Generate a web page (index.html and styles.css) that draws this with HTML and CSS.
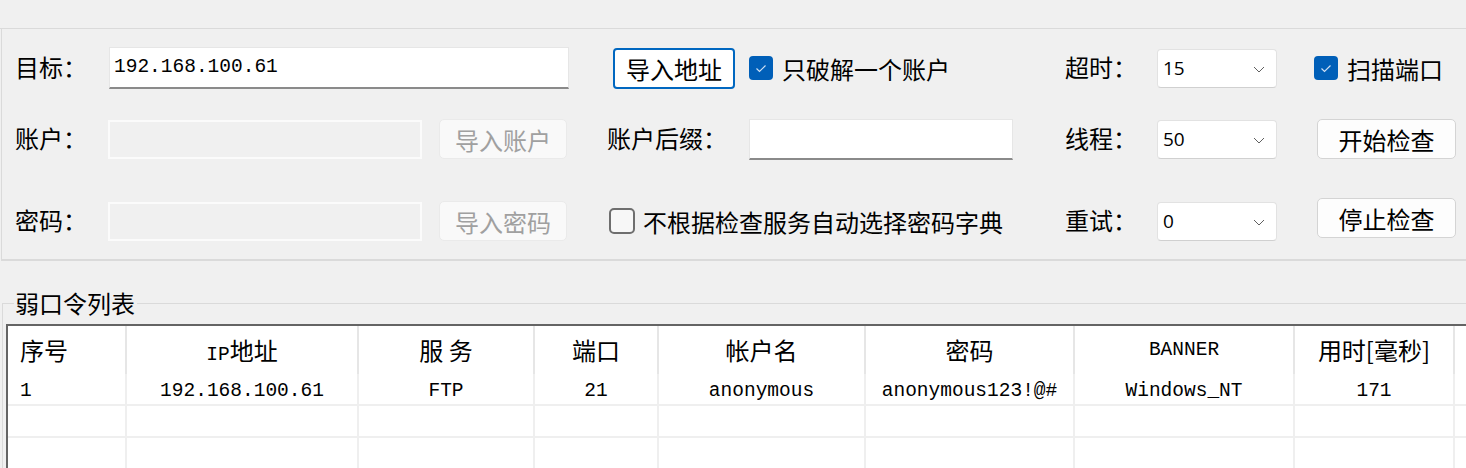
FILE: index.html
```html
<!DOCTYPE html>
<html lang="zh-CN">
<head>
<meta charset="utf-8">
<title>弱口令检查</title>
<link rel="stylesheet" href="styles.css">
</head>
<body>
<div class="app">
  <div class="topbar"></div>
  <div class="panel">
    <!-- row 1 -->
    <div class="label r1 c1">目标：</div>
    <div class="input target r1 c2">192.168.100.61</div>
    <div class="btn primary r1 c4">导入地址</div>
    <label class="check r1 c5">
      <svg class="box" width="24" height="24" viewBox="0 0 24 24"><rect x="0" y="0" width="24" height="24" rx="4" fill="#005fb8"/><path d="M7.5 12.5 L10.5 15.5 L16.5 9.5" fill="none" stroke="#cfe0f3" stroke-width="1.2"/></svg>
      <span>只破解一个账户</span>
    </label>
    <div class="label r1 c6">超时：</div>
    <div class="select r1 c7"><span>15</span><svg width="12" height="7" viewBox="0 0 12 7"><path d="M1 1 L6 6 L11 1" fill="none" stroke="#606060" stroke-width="1"/></svg></div>
    <label class="check r1 c8">
      <svg class="box" width="24" height="24" viewBox="0 0 24 24"><rect x="0" y="0" width="24" height="24" rx="4" fill="#005fb8"/><path d="M7.5 12.5 L10.5 15.5 L16.5 9.5" fill="none" stroke="#cfe0f3" stroke-width="1.2"/></svg>
      <span>扫描端口</span>
    </label>

    <!-- row 2 -->
    <div class="label r2 c1">账户：</div>
    <div class="input disabled r2 c2"></div>
    <div class="btn disabled-btn r2 c3">导入账户</div>
    <div class="label r2 c4">账户后缀：</div>
    <div class="input suffix r2 c5"></div>
    <div class="label r2 c6">线程：</div>
    <div class="select r2 c7"><span>50</span><svg width="12" height="7" viewBox="0 0 12 7"><path d="M1 1 L6 6 L11 1" fill="none" stroke="#606060" stroke-width="1"/></svg></div>
    <div class="btn action r2 c8">开始检查</div>

    <!-- row 3 -->
    <div class="label r3 c1">密码：</div>
    <div class="input disabled r3 c2"></div>
    <div class="btn disabled-btn r3 c3">导入密码</div>
    <label class="check unchecked r3 c45">
      <svg class="box" width="26" height="26" viewBox="0 0 26 26"><rect x="1" y="1" width="24" height="24" rx="4" fill="#f7f7f7" stroke="#6e6e6e" stroke-width="2"/></svg>
      <span>不根据检查服务自动选择密码字典</span>
    </label>
    <div class="label r3 c6">重试：</div>
    <div class="select r3 c7"><span>0</span><svg width="12" height="7" viewBox="0 0 12 7"><path d="M1 1 L6 6 L11 1" fill="none" stroke="#606060" stroke-width="1"/></svg></div>
    <div class="btn action stop r3 c8">停止检查</div>
  </div>

  <div class="group">
    <div class="group-title">弱口令列表</div>
    <div class="table">
      <div class="row head">
        <div class="cell left">序号</div>
        <div class="cell"><span class="mono">IP</span>地址</div>
        <div class="cell">服 务</div>
        <div class="cell">端口</div>
        <div class="cell">帐户名</div>
        <div class="cell">密码</div>
        <div class="cell mono">BANNER</div>
        <div class="cell">用时[毫秒]</div>
        <div class="cell last"></div>
      </div>
      <div class="row data">
        <div class="cell left">1</div>
        <div class="cell">192.168.100.61</div>
        <div class="cell">FTP</div>
        <div class="cell">21</div>
        <div class="cell">anonymous</div>
        <div class="cell">anonymous123!@#</div>
        <div class="cell">Windows_NT</div>
        <div class="cell">171</div>
        <div class="cell last"></div>
      </div>
      <div class="row data">
        <div class="cell"></div><div class="cell"></div><div class="cell"></div><div class="cell"></div><div class="cell"></div><div class="cell"></div><div class="cell"></div><div class="cell"></div><div class="cell last"></div>
      </div>
      <div class="row data final">
        <div class="cell"></div><div class="cell"></div><div class="cell"></div><div class="cell"></div><div class="cell"></div><div class="cell"></div><div class="cell"></div><div class="cell"></div><div class="cell last"></div>
      </div>
    </div>
  </div>
</div>
</body>
</html>
```

FILE: styles.css
```css
* { box-sizing: border-box; }

html, body {
  margin: 0;
  padding: 0;
  background: #f0f0f0;
}

body {
  width: 1466px;
  height: 468px;
  overflow: hidden;
  font-family: "Noto Sans CJK SC", "Noto Sans", sans-serif;
  font-size: 24px;
  color: #000;
}

.app {
  width: 1466px;
  height: 468px;
}

.topbar {
  height: 29px;
  border-bottom: 1px solid #dadada;
}

.panel {
  margin-left: 1px;
  border-left: 1px solid #dadada;
  border-bottom: 2px solid #dadada;
  padding: 17px 0 16px 14px;
  display: grid;
  grid-template-columns: 92px 331px 169px 141px 317px 91px 157px 150px;
  grid-template-rows: 44px 27px 44px 38px 44px;
  align-items: center;
}

.r1 { grid-row: 1; }
.r2 { grid-row: 3; }
.r3 { grid-row: 5; }
.c1 { grid-column: 1; }
.c2 { grid-column: 2; }
.c3 { grid-column: 3; }
.c4 { grid-column: 4; }
.c5 { grid-column: 5; }
.c45 { grid-column: 4 / 6; }
.c6 { grid-column: 6; }
.c7 { grid-column: 7; }
.c8 { grid-column: 8; }

.label {
  line-height: 30px;
  white-space: nowrap;
  margin-left: -1px;
  margin-top: -2px;
}

.input {
  height: 40px;
  background: #fff;
  border: 1px solid #e6e6e6;
}

.input.target {
  grid-column: 2 / 4;
  width: 460px;
  margin-left: 1px;
  height: 42px;
  border-bottom: 2px solid #8a8a8a;
  font-family: "Liberation Mono", monospace;
  font-size: 19.5px;
  line-height: 38px;
  padding-left: 4px;
}

.input.disabled {
  width: 314px;
  height: 39px;
  background: #f0f0f0;
  border: 2px solid #fbfbfb;
}

.input.suffix {
  width: 264px;
  height: 41px;
  border-bottom: 2px solid #8a8a8a;
}

.btn {
  display: flex;
  align-items: center;
  justify-content: center;
  height: 40px;
  border-radius: 5px;
  white-space: nowrap;
}

.btn.primary {
  width: 122px;
  margin-left: 5px;
  height: 41px;
  background: #fff;
  border: 2px solid #0067c0;
  border-radius: 4px;
}

.btn.disabled-btn {
  width: 128px;
  background: #f9f9f9;
  border: 1px solid #eaeaea;
  color: #a0a0a0;
}

.btn.action {
  width: 139px;
  margin-left: 3px;
  background: #fdfdfd;
  border: 1px solid #d4d4d4;
}

.btn.stop {
  margin-top: -6px;
}

.check {
  display: flex;
  align-items: center;
  gap: 9px;
  white-space: nowrap;
}

.check .box { flex: none; }

.check.unchecked {
  margin-left: 1px;
  gap: 8px;
}

.select {
  width: 120px;
  height: 39px;
  background: #fff;
  border: 1px solid #e2e2e2;
  border-bottom-color: #d0d0d0;
  border-radius: 4px;
  display: flex;
  align-items: center;
  justify-content: space-between;
  padding: 0 11px 0 5px;
  font-family: "Open Sans", "Noto Sans", sans-serif;
  font-size: 19px;
}

.select svg { margin-top: 2px; }

.group {
  margin-top: 42px;
  margin-left: 2px;
  border-top: 1px solid #dadada;
  border-left: 1px solid #dadada;
}

.group-title {
  width: fit-content;
  margin-top: -14px;
  margin-left: 11px;
  padding: 0 2px 0 1px;
  background: #f0f0f0;
  line-height: 26px;
  height: 26px;
}

.table {
  margin-top: 8px;
  margin-left: 3px;
  background: #fff;
  border-top: 2px solid #646464;
  border-left: 2px solid #646464;
  overflow: hidden;
}

.row {
  display: grid;
  grid-template-columns: 119px 232px 176px 124px 207px 209px 220px 160px 1fr;
}

.cell {
  border-right: 2px solid #e6e6e6;
  text-align: center;
  white-space: nowrap;
  overflow: hidden;
}

.cell.left {
  text-align: left;
  padding-left: 12px;
}

.cell.last { border-right: none; }

.head .cell {
  height: 48px;
  line-height: 48px;
}

.data .cell {
  height: 32px;
  line-height: 30px;
  padding-top: 2px;
  border-right-color: #efefef;
  border-bottom: 2px solid #efefef;
  font-family: "Liberation Mono", monospace;
  font-size: 19.5px;
}

.data.final .cell {
  height: 30px;
  border-bottom: none;
}

.mono {
  font-family: "Liberation Mono", monospace;
  font-size: 19.5px;
}
```
